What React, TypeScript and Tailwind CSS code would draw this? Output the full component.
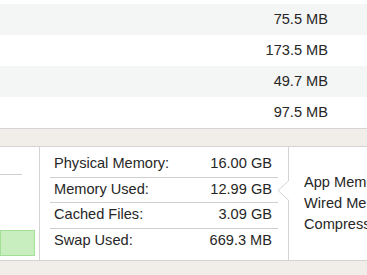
const rows = ["75.5 MB", "173.5 MB", "49.7 MB", "97.5 MB"]

const stats = [
  { label: "Physical Memory:", value: "16.00 GB" },
  { label: "Memory Used:", value: "12.99 GB" },
  { label: "Cached Files:", value: "3.09 GB" },
  { label: "Swap Used:", value: "669.3 MB" },
]

const breakdown = ["App Memory:", "Wired Memory:", "Compressed:"]

export default function App() {
  return (
    <div className="w-[367px] h-[275px] overflow-hidden bg-[#f1eeea] text-[#262626] text-[14.6px] font-['Liberation_Sans',Arial,sans-serif]">
      {/* process list */}
      <div className="bg-white pt-[4px] border-b border-[#d4d4d4]">
        {rows.map((r, i) => (
          <div
            key={r}
            className={`h-[31px] flex items-center justify-end pr-[39px] ${i % 2 === 0 ? "bg-[#f4f5f5]" : "bg-white"}`}
          >
            {r}
          </div>
        ))}
      </div>

      <div className="h-[17px]" />

      {/* memory pressure panel */}
      <div className="h-[115px] flex bg-white border-y border-[#d4d4d4]">
        <div className="w-[40px] border-r border-[#d4d4d4] flex flex-col">
          <div className="h-[28px] w-[22px] border-b border-[#cfcfcf]" />
          <div className="flex-1" />
          <div className="h-[26px] w-[35px] mb-[4px] bg-[#c8eec0] border border-[#a3df97]" />
        </div>

        <div className="relative w-[248px] pt-[5px]">
          <div className="mx-[10px]">
            {stats.map((s, i) => (
              <div
                key={s.label}
                className={`h-[25.5px] flex items-center justify-between pl-[4px] pr-[6px] ${i < 3 ? "border-b border-[#cfcfcf]" : ""}`}
              >
                <span>{s.label}</span>
                <span>{s.value}</span>
              </div>
            ))}
          </div>
          <svg className="absolute right-[-1px] top-0" width="12" height="113" viewBox="0 0 12 113">
            <path d="M11.5 0 V34 L1 43.5 L11.5 53 V113" fill="white" stroke="#d4d4d4" strokeWidth="1" />
          </svg>
        </div>

        <div className="flex-1 pl-[16px] pt-[27px] flex flex-col gap-[4px] whitespace-nowrap overflow-hidden">
          {breakdown.map(b => (
            <div key={b} className="h-[17px] leading-[17px]">{b}</div>
          ))}
        </div>
      </div>
    </div>
  )
}
